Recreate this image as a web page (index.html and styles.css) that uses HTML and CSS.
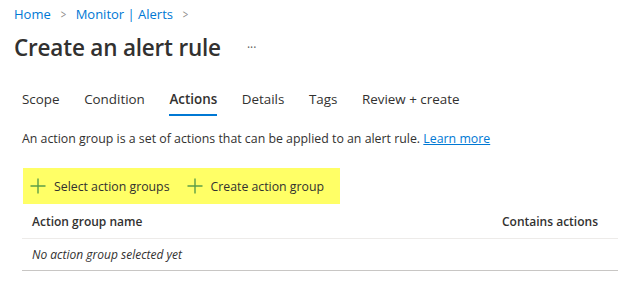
FILE: index.html
```html
<!DOCTYPE html>
<html>
<head>
<meta charset="utf-8">
<title>Create an alert rule</title>
<link rel="stylesheet" href="styles.css">
</head>
<body>
<div class="page">
  <div class="breadcrumb">
    <a href="#">Home</a>
    <span class="chev">&gt;</span>
    <a href="#">Monitor | Alerts</a>
    <span class="chev">&gt;</span>
  </div>
  <div class="title-row">
    <h1 class="title">Create an alert rule</h1>
    <span class="more">&middot;&middot;&middot;</span>
  </div>
  <div class="tabs">
    <span class="tab">Scope</span>
    <span class="tab">Condition</span>
    <span class="tab active">Actions</span>
    <span class="tab">Details</span>
    <span class="tab">Tags</span>
    <span class="tab">Review + create</span>
  </div>
  <p class="desc">An action group is a set of actions that can be applied to an alert rule. <a href="#">Learn more</a></p>
  <div class="toolbar">
    <span class="cmd"><svg width="16" height="16" viewBox="0 0 16 16"><path d="M8 0.5V15.5M0.5 8H15.5" stroke="#5c9e48" stroke-width="1.4" fill="none"/></svg>Select action groups</span>
    <span class="cmd"><svg width="16" height="16" viewBox="0 0 16 16"><path d="M8 0.5V15.5M0.5 8H15.5" stroke="#5c9e48" stroke-width="1.4" fill="none"/></svg>Create action group</span>
  </div>
  <div class="grid">
    <div class="grid-head">
      <span>Action group name</span>
      <span>Contains actions</span>
    </div>
    <div class="grid-row">No action group selected yet</div>
  </div>
</div>
</body>
</html>
```

FILE: styles.css
```css
body {
	margin: 0;
	background: #fff;
	color: #323130;
	font-family: "Open Sans", "Noto Sans", sans-serif;
}
.page {
	padding: 4px 0 0 14px;
}
.breadcrumb {
	display: flex;
	align-items: center;
	gap: 9px;
	font-size: 13px;
	height: 20px;
}
.breadcrumb a {
	color: #0078d4;
	text-decoration: none;
}
.chev {
	color: #8a8886;
	font-size: 12px;
	transform: scaleX(0.8);
}
.title-row {
	display: flex;
	align-items: center;
	margin-top: 5px;
	height: 36px;
}
.title {
	margin: 0;
	font-size: 22.5px;
	font-weight: 600;
	letter-spacing: -0.2px;
}
.more {
	margin-left: 26px;
	font-size: 12px;
	color: #605e5c;
}
.tabs {
	display: flex;
	gap: 24.6px;
	margin: 17px 0 0 8px;
	font-size: 13.4px;
}
.tab {
	padding: 8px 0 6px;
	border-bottom: 2px solid transparent;
}
.tab.active {
	font-weight: 600;
	border-bottom-color: #0078d4;
}
.desc {
	margin: 14px 0 0 8px;
	font-size: 12.35px;
}
.desc a {
	color: #0078d4;
}
.toolbar {
	display: flex;
	align-items: center;
	gap: 17px;
	width: 317px;
	height: 36px;
	margin: 21px 0 0 9px;
	padding-left: 7px;
	box-sizing: border-box;
	background: #ffff66;
	font-size: 12.3px;
}
.cmd {
	display: flex;
	align-items: center;
	gap: 8px;
}
.grid {
	margin: 0 0 0 8px;
	font-size: 12px;
}
.grid-head {
	display: flex;
	justify-content: space-between;
	padding: 0 20px 0 10px;
	height: 34px;
	align-items: center;
	font-weight: 600;
	border-bottom: 1px solid #edebe9;
}
.grid-row {
	padding: 0 10px;
	height: 31px;
	display: flex;
	align-items: center;
	font-style: italic;
	border-bottom: 1px solid #c8c6c4;
}
```
